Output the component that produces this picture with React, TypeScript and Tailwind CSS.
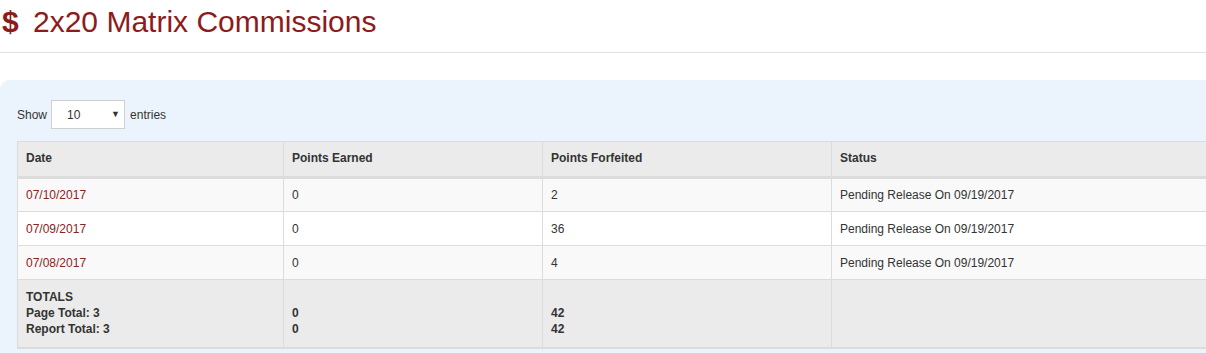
const rows = [
  { date: '07/10/2017', earned: '0', forfeited: '2', status: 'Pending Release On 09/19/2017' },
  { date: '07/09/2017', earned: '0', forfeited: '36', status: 'Pending Release On 09/19/2017' },
  { date: '07/08/2017', earned: '0', forfeited: '4', status: 'Pending Release On 09/19/2017' },
];

export default function App() {
  return (
    <div className="h-[353px] w-[1206px] overflow-hidden bg-white font-['Liberation_Sans',Arial,sans-serif] text-[12px] text-[#333]">
      <div className="flex h-[53px] items-start border-b border-[#e0e0e0] pt-[3px]">
        <h1 className="flex items-center text-[30px] leading-[38px] text-[#8c1c1c]">
          <span className="ml-[2px] w-[31px] font-bold">$</span>
          <span>2x20 Matrix Commissions</span>
        </h1>
      </div>

      <div className="mt-[27px] w-[1240px] rounded-tl-[9px] bg-[#ebf3fd] px-[17px] pt-[20px] pb-[20px]">
        <div className="flex items-center">
          <span>Show</span>
          <div className="ml-[4px] flex h-[29px] w-[74px] items-center justify-between border border-[#cfcfcf] bg-white pl-[15px] pr-[4px] text-[#333]">
            <span>10</span>
            <span className="text-[9px]">▼</span>
          </div>
          <span className="ml-[5px]">entries</span>
        </div>

        <table className="mt-[12px] w-[1230px] table-fixed border-collapse">
          <colgroup>
            <col className="w-[266px]" />
            <col className="w-[259px]" />
            <col className="w-[289px]" />
            <col />
          </colgroup>
          <thead>
            <tr className="h-[36px] bg-[#ebebeb] text-left font-bold">
              <th className="border border-b-[3px] border-[#dcdcdc] px-[8px] pb-[2px]">Date</th>
              <th className="border border-b-[3px] border-[#dcdcdc] px-[8px] pb-[2px]">Points Earned</th>
              <th className="border border-b-[3px] border-[#dcdcdc] px-[8px] pb-[2px]">Points Forfeited</th>
              <th className="border border-b-[3px] border-[#dcdcdc] px-[8px] pb-[2px]">Status</th>
            </tr>
          </thead>
          <tbody>
            {rows.map((r, i) => (
              <tr key={r.date} className={`h-[34px] ${i % 2 === 0 ? 'bg-[#f9f9f9]' : 'bg-white'}`}>
                <td className="border border-[#dcdcdc] px-[8px] text-[#8c2222]">{r.date}</td>
                <td className="border border-[#dcdcdc] px-[8px]">{r.earned}</td>
                <td className="border border-[#dcdcdc] px-[8px]">{r.forfeited}</td>
                <td className="border border-[#dcdcdc] px-[8px]">{r.status}</td>
              </tr>
            ))}
            <tr className="h-[68px] bg-[#ebebeb] align-top font-bold leading-[16px]">
              <td className="border border-b-[2px] border-[#dcdcdc] px-[8px] pt-[9px]">
                <div>TOTALS</div>
                <div>Page Total: 3</div>
                <div>Report Total: 3</div>
              </td>
              <td className="border border-b-[2px] border-[#dcdcdc] px-[8px] pt-[25px]">
                <div>0</div>
                <div>0</div>
              </td>
              <td className="border border-b-[2px] border-[#dcdcdc] px-[8px] pt-[25px]">
                <div>42</div>
                <div>42</div>
              </td>
              <td className="border border-b-[2px] border-[#dcdcdc] px-[8px]" />
            </tr>
          </tbody>
        </table>
      </div>
    </div>
  );
}
